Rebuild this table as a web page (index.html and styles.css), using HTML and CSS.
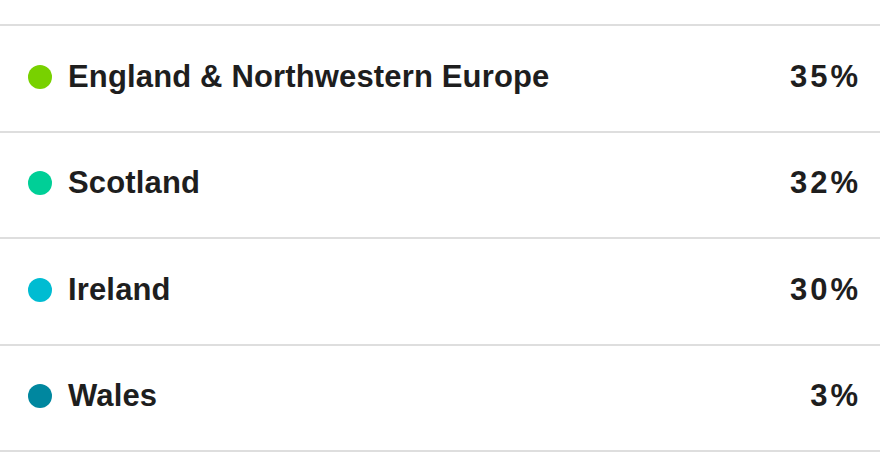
FILE: index.html
```html
<!DOCTYPE html>
<html lang="en">
<head>
<meta charset="utf-8">
<title>Ethnicity</title>
<link rel="stylesheet" href="styles.css">
</head>
<body>
<ul class="regions">
  <li class="region">
    <span class="dot dot-england"></span>
    <span class="name">England &amp; Northwestern Europe</span>
    <span class="pct">35%</span>
  </li>
  <li class="region">
    <span class="dot dot-scotland"></span>
    <span class="name">Scotland</span>
    <span class="pct">32%</span>
  </li>
  <li class="region">
    <span class="dot dot-ireland"></span>
    <span class="name">Ireland</span>
    <span class="pct">30%</span>
  </li>
  <li class="region">
    <span class="dot dot-wales"></span>
    <span class="name">Wales</span>
    <span class="pct">3%</span>
  </li>
</ul>
</body>
</html>
```
FILE: styles.css
```css
html, body {
  margin: 0;
  padding: 0;
  background: #ffffff;
}
body {
  font-family: "Liberation Sans", Arial, sans-serif;
  color: #1e1e1e;
}
.regions {
  list-style: none;
  margin: 0;
  padding: 24px 0 0 0;
}
.region {
  display: flex;
  align-items: center;
  height: 101.5px;
  padding: 0 19px 3px 28px;
  border-top: 2px solid #dedede;
}
.region:last-child {
  border-bottom: 2px solid #dedede;
}
.dot {
  width: 24px;
  height: 24px;
  border-radius: 50%;
  flex: none;
  margin-right: 16px;
}
.dot-england { background: #78d100; }
.dot-scotland { background: #00cf97; }
.dot-ireland { background: #00bcd2; }
.dot-wales { background: #00879f; }
.name {
  flex: 1;
  font-size: 31px;
  font-weight: 700;
  letter-spacing: 0.15px;
}
.pct {
  font-size: 31px;
  font-weight: 700;
  letter-spacing: 3px;
}
```
